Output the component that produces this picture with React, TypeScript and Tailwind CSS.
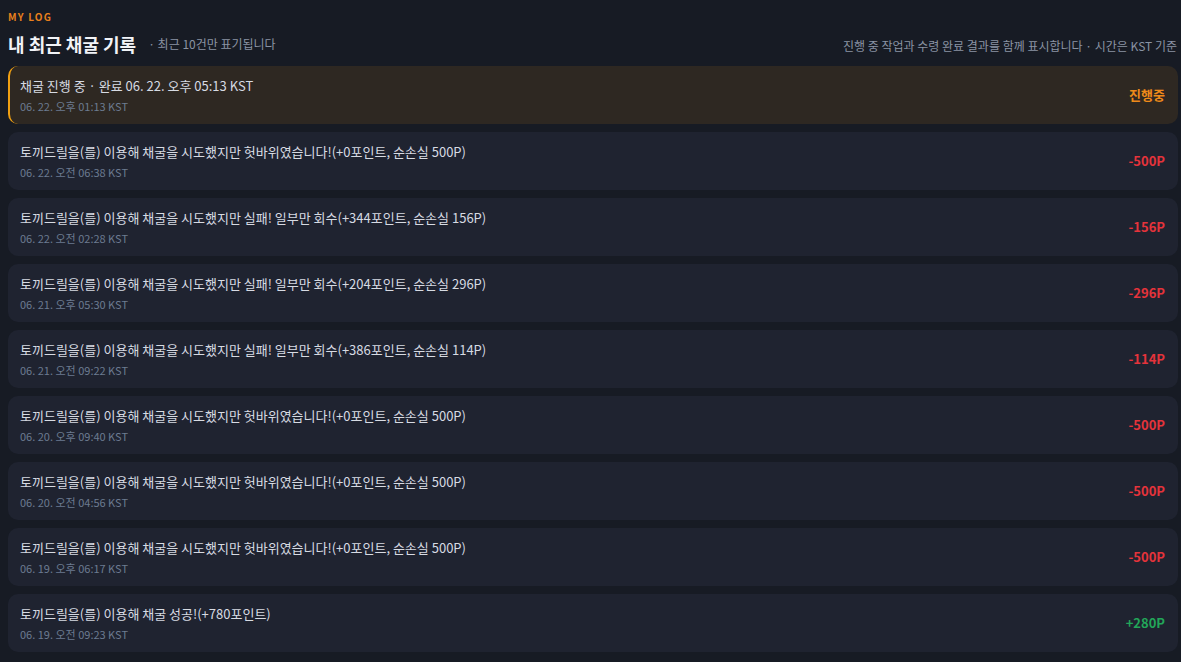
type LogItem = {
  text: string;
  time: string;
  amount: string;
  tone: "pending" | "loss" | "gain";
};

const logs: LogItem[] = [
  { text: "채굴 진행 중 · 완료 06. 22. 오후 05:13 KST", time: "06. 22. 오후 01:13 KST", amount: "진행중", tone: "pending" },
  { text: "토끼드릴을(를) 이용해 채굴을 시도했지만 헛바위였습니다!(+0포인트, 순손실 500P)", time: "06. 22. 오전 06:38 KST", amount: "-500P", tone: "loss" },
  { text: "토끼드릴을(를) 이용해 채굴을 시도했지만 실패! 일부만 회수(+344포인트, 순손실 156P)", time: "06. 22. 오전 02:28 KST", amount: "-156P", tone: "loss" },
  { text: "토끼드릴을(를) 이용해 채굴을 시도했지만 실패! 일부만 회수(+204포인트, 순손실 296P)", time: "06. 21. 오후 05:30 KST", amount: "-296P", tone: "loss" },
  { text: "토끼드릴을(를) 이용해 채굴을 시도했지만 실패! 일부만 회수(+386포인트, 순손실 114P)", time: "06. 21. 오전 09:22 KST", amount: "-114P", tone: "loss" },
  { text: "토끼드릴을(를) 이용해 채굴을 시도했지만 헛바위였습니다!(+0포인트, 순손실 500P)", time: "06. 20. 오후 09:40 KST", amount: "-500P", tone: "loss" },
  { text: "토끼드릴을(를) 이용해 채굴을 시도했지만 헛바위였습니다!(+0포인트, 순손실 500P)", time: "06. 20. 오전 04:56 KST", amount: "-500P", tone: "loss" },
  { text: "토끼드릴을(를) 이용해 채굴을 시도했지만 헛바위였습니다!(+0포인트, 순손실 500P)", time: "06. 19. 오후 06:17 KST", amount: "-500P", tone: "loss" },
  { text: "토끼드릴을(를) 이용해 채굴 성공!(+780포인트)", time: "06. 19. 오전 09:23 KST", amount: "+280P", tone: "gain" },
];

const amountColor = {
  pending: "text-[#ee8a1a]",
  loss: "text-[#e5333b]",
  gain: "text-[#22a659]",
};

export default function App() {
  return (
    <div
      className="min-h-screen bg-[#171b24] pt-[10px] pr-[3px] pb-4 pl-2"
      style={{ fontFamily: '"Noto Sans CJK KR", "Noto Sans", sans-serif' }}
    >
      <p className="text-[10px] leading-[14px] font-bold tracking-[0.12em] text-[#e8801c]">MY LOG</p>
      <div className="mt-[7px] mb-[9px] flex h-[26px] items-center justify-between">
        <div className="flex items-center gap-3">
          <h2 className="text-[18px] leading-[26px] font-bold text-[#f1f3f7]">내 최근 채굴 기록</h2>
          <span className="text-[12px] text-[#8a93a3]">· 최근 10건만 표기됩니다</span>
        </div>
        <span className="mt-[4px] pr-[1px] text-[12px] text-[#8a93a3]">
          진행 중 작업과 수령 완료 결과를 함께 표시합니다 · 시간은 KST 기준
        </span>
      </div>

      <div className="flex flex-col gap-2">
        {logs.map((log, i) => (
          <div
            key={i}
            className={
              log.tone === "pending"
                ? "flex h-[58px] items-center justify-between rounded-[10px] border-l-2 border-[#f0a012] bg-[#2e2822] pr-[13px] pl-[10px]"
                : "flex h-[58px] items-center justify-between rounded-[10px] bg-[#1f2330] pr-[13px] pl-3"
            }
          >
            <div className="flex flex-col">
              <p className="text-[13px] leading-[20px] text-[#d7dbe3]">{log.text}</p>
              <p className="mt-[2px] text-[11px] leading-[16px] text-[#6c7b90]">{log.time}</p>
            </div>
            <span className={`text-[13px] font-bold ${amountColor[log.tone]}`}>{log.amount}</span>
          </div>
        ))}
      </div>
    </div>
  );
}
